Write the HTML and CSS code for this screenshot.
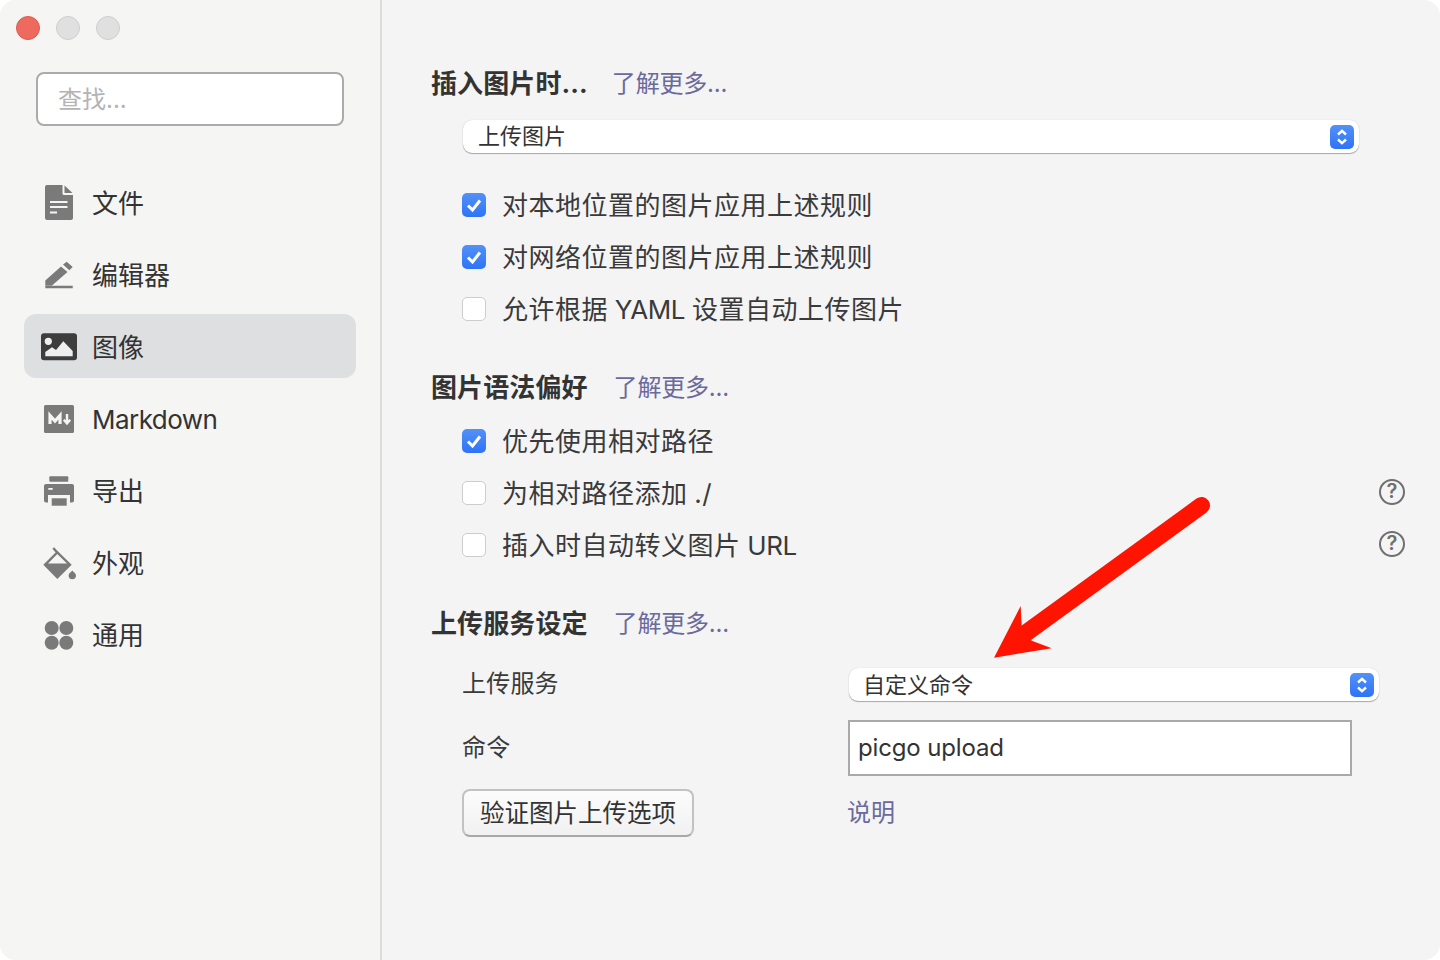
FILE: index.html
```html
<!DOCTYPE html>
<html lang="zh-CN">
<head>
<meta charset="utf-8">
<title>偏好设置</title>
<link rel="stylesheet" href="styles.css">
</head>
<body>
<div class="window">
  <aside class="sidebar">
    <div class="lights"><span class="light red"></span><span class="light"></span><span class="light"></span></div>
    <div class="search">查找...</div>
    <nav class="nav">
      <div class="nav-item">
        <svg class="icon" viewBox="0 0 36 36"><path class="g" d="M6 1H21.5V9.5a1.5 1.5 0 0 0 1.5 1.5H32V34a2 2 0 0 1-2 2H6a2 2 0 0 1-2-2V3a2 2 0 0 1 2-2z"/><path class="g" d="M23.5 1.5 31.5 9H23.500z"/><path class="wl" d="M9 18H26.500M9 23H26.500M9 28.500H16"/></svg>
        <span>文件</span>
      </div>
      <div class="nav-item">
        <svg class="icon" viewBox="0 0 36 36"><path class="g" d="M4.300 29.500V24.500L20 10.500 26.500 16 11 29.500zM4.300 29.700H31.700V32.300H4.300zM22 8.500 25.700 5.700 31.700 11 28.300 14.300z"/></svg>
        <span>编辑器</span>
      </div>
      <div class="nav-item active">
        <svg class="icon" viewBox="0 0 36 36"><rect class="d" x="0" y="5.300" width="36" height="27" rx="3"/><circle cx="7.300" cy="13.300" r="3.600" fill="#eee"/><path fill="#eee" d="M4.300 28.300V24L11 19.300 15 22 22.300 13.300 31.700 23V28.300z"/></svg>
        <span>图像</span>
      </div>
      <div class="nav-item">
        <svg class="icon" viewBox="0 0 36 36"><rect class="g" x="3" y="5" width="30" height="28" rx="1.500"/><path class="ws" d="M9 24V15.500L14 21 19 15.500V24"/><path class="ws thin" d="M26 14V22.500M22.800 19.800 26 23.500 29.200 19.800"/></svg>
        <span class="en">Markdown</span>
      </div>
      <div class="nav-item">
        <svg class="icon" viewBox="0 0 36 36"><rect class="g" x="8.300" y="4.300" width="19" height="5.400" rx="1"/><path class="g" d="M5 12H31a2 2 0 0 1 2 2V28.500a2 2 0 0 1-2 2H29V23H7V30.500H5a2 2 0 0 1-2-2V14a2 2 0 0 1 2-2z"/><rect class="g" x="10.700" y="26.300" width="15" height="7.400"/><rect x="7.300" y="16" width="4.400" height="1.800" fill="#f5f5f4"/></svg>
        <span>导出</span>
      </div>
      <div class="nav-item">
        <svg class="icon" viewBox="0 0 36 36"><path class="g" d="M2.300 20.700 16.300 6.700 30.700 20.700 16.300 35zM7 19.600H26L16.300 10z"/><path class="handle" d="M12.300 4 17 9.500"/><path class="g" d="M31.300 26.500C32.500 28 35 29.500 35 31.500A3.700 3.700 0 0 1 27.600 31.500C27.600 29.500 30 28 31.300 26.500z"/></svg>
        <span>外观</span>
      </div>
      <div class="nav-item">
        <svg class="icon" viewBox="0 0 36 36"><circle class="g" cx="10.700" cy="12" r="7"/><circle class="g" cx="25.300" cy="12" r="7"/><circle class="g" cx="10.700" cy="26.700" r="7"/><circle class="g" cx="25.300" cy="26.700" r="7"/></svg>
        <span>通用</span>
      </div>
    </nav>
  </aside>

  <main class="main">
    <div class="heading first"><h2>插入图片时...</h2><a class="link">了解更多...</a></div>
    <div class="select wide"><span>上传图片</span>
      <svg class="stepper" viewBox="0 0 24 24"><rect width="24" height="24" rx="5" fill="url(#blue)"/><path class="chev" d="M8 9.500 12 5.800 16 9.500M8 14.500 12 18.200 16 14.500"/></svg>
    </div>
    <div class="rows top">
      <div class="row"><span class="box on"><svg viewBox="0 0 24 24"><path d="M6 12.500 10.500 17 18 7.500"/></svg></span><span class="text">对本地位置的图片应用上述规则</span></div>
      <div class="row"><span class="box on"><svg viewBox="0 0 24 24"><path d="M6 12.500 10.500 17 18 7.500"/></svg></span><span class="text">对网络位置的图片应用上述规则</span></div>
      <div class="row"><span class="box"></span><span class="text">允许根据 <span class="tight">YAML</span> 设置自动上传图片</span></div>
    </div>
    <div class="heading"><h2>图片语法偏好</h2><a class="link">了解更多...</a></div>
    <div class="rows">
      <div class="row"><span class="box on"><svg viewBox="0 0 24 24"><path d="M6 12.500 10.500 17 18 7.500"/></svg></span><span class="text">优先使用相对路径</span></div>
      <div class="row"><span class="box"></span><span class="text">为相对路径添加 ./</span><span class="help">?</span></div>
      <div class="row"><span class="box"></span><span class="text">插入时自动转义图片 <span class="tight">URL</span></span><span class="help">?</span></div>
    </div>
    <div class="heading"><h2>上传服务设定</h2><a class="link">了解更多...</a></div>
    <div class="form">
      <div class="label up">上传服务</div>
      <div class="select narrow"><span>自定义命令</span>
        <svg class="stepper" viewBox="0 0 24 24"><rect width="24" height="24" rx="5" fill="url(#blue)"/><path class="chev" d="M8 9.500 12 5.800 16 9.500M8 14.500 12 18.200 16 14.500"/></svg>
      </div>
      <div class="label mid">命令</div>
      <div class="field">picgo upload</div>
      <div class="button">验证图片上传选项</div>
      <a class="link doc">说明</a>
    </div>
  </main>

  <svg class="arrow" viewBox="0 0 1440 960">
    <defs><linearGradient id="blue" x1="0" y1="0" x2="0" y2="1"><stop offset="0" stop-color="#5291f8"/><stop offset="1" stop-color="#2f73f6"/></linearGradient></defs>
    <path class="shaft" d="M1201.500 505.500 1026 633"/>
    <path class="head" d="M994 657.700 1020.700 606 1021.700 626.700 1031.700 640.700 1051.700 648.300z"/>
  </svg>
</div>
</body>
</html>
```
FILE: styles.css
```css
* { box-sizing: border-box; }
html, body { margin: 0; padding: 0; background: #fff; }
body {
  width: 1440px;
  height: 960px;
  overflow: hidden;
  font-family: Inter, "Noto Sans CJK SC", sans-serif;
  line-height: 1;
  color: #3a3a3a;
}
.window {
  position: relative;
  display: flex;
  width: 1440px;
  height: 960px;
  border-radius: 16px;
  overflow: hidden;
  background: #f4f4f4;
}
.sidebar {
  width: 382px;
  flex: none;
  background: #f5f5f4;
  border-right: 2px solid #dcdcdc;
  padding: 16px 24px 0 16px;
}
.lights { display: flex; gap: 16px; }
.light {
  width: 24px;
  height: 24px;
  border-radius: 50%;
  background: #e0e0e0;
  border: 1px solid #cfcfcf;
}
.light.red { background: #ee6a5f; border-color: #dd5a50; }
.search {
  margin: 32px 0 0 20px;
  width: 308px;
  height: 54px;
  border: 2px solid #ababab;
  border-radius: 8px;
  background: #fff;
  padding-left: 20px;
  font-size: 24px;
  line-height: 52px;
  color: #b4b4b4;
}
.nav { margin: 44px 0 0 8px; display: flex; flex-direction: column; gap: 8px; }
.nav-item {
  display: flex;
  align-items: center;
  gap: 15px;
  width: 332px;
  height: 64px;
  padding-left: 17px;
  border-radius: 12px;
  font-size: 26px;
  color: #333;
}
.nav-item span { padding-top: 4px; }
.nav-item.active { background: #dedfe1; }
.en { letter-spacing: -.55px; }
.icon { width: 36px; height: 36px; flex: none; overflow: visible; }
.icon .g { fill: #7a7a7a; fill-rule: evenodd; }
.icon .d { fill: #3d3d3d; }
.icon .wl { fill: none; stroke: #f5f5f4; stroke-width: 2; }
.icon .ws { fill: none; stroke: #f5f5f4; stroke-width: 3.200; }
.icon .ws.thin { stroke-width: 2.400; }
.icon .handle { fill: none; stroke: #7a7a7a; stroke-width: 2.400; }

.main { flex: 1; padding: 60px 35px 0 49px; min-width: 0; }
.heading { display: flex; align-items: center; height: 46px; margin-top: 29px; gap: 26px; }
.heading.first { margin-top: 0; gap: 24px; }
.heading h2 { margin: 2px 0 0; font-size: 26px; font-weight: 700; color: #333; letter-spacing: .1px; }
.link { font-size: 24px; color: #6a6a9c; letter-spacing: -.2px; }
.heading .link { margin-top: 2px; }
.select {
  display: flex;
  align-items: center;
  justify-content: space-between;
  height: 33px;
  background: #fff;
  border-radius: 9px;
  box-shadow: 0 0 1px rgba(0,0,0,.2), 0 1px 1px rgba(0,0,0,.3);
  padding: 0 5px 0 15px;
  font-size: 22px;
  color: #333;
}
.select.wide { margin: 14px 46px 0 32px; }
.select.wide > span { margin-bottom: 2px; }
.stepper { width: 24px; height: 24px; flex: none; }
.chev { fill: none; stroke: #fff; stroke-width: 2.400; }
.rows { margin-top: 5px; }
.rows.top { margin-top: 26px; }
.row {
  display: flex;
  align-items: center;
  height: 52px;
  padding-left: 31px;
  gap: 16px;
  font-size: 26px;
  letter-spacing: .5px;
  word-spacing: -1px;
}
.text { padding-top: 2px; }
.tight { letter-spacing: -.4px; }
.box {
  width: 24px;
  height: 24px;
  flex: none;
  border-radius: 5px;
  background: #fff;
  border: 1px solid #cdcdcd;
}
.box.on {
  border: 0;
  background: linear-gradient(#5291f8, #2f73f6);
}
.box svg { display: block; width: 24px; height: 24px; fill: none; stroke: #fff; stroke-width: 3; }
.help {
  margin: 0 0 2px auto;
  width: 26px;
  height: 26px;
  border: 2.500px solid #6f6f6f;
  border-radius: 50%;
  font-size: 20px;
  font-weight: 600;
  line-height: 21px;
  text-align: center;
  letter-spacing: 0;
  color: #6f6f6f;
}
.form {
  display: grid;
  grid-template-columns: 386px 1fr;
  grid-template-rows: 34px 74px 61px;
  padding-left: 31px;
  margin-top: 22px;
}
.label { font-size: 24px; letter-spacing: .2px; align-self: center; }
.label.up { margin-bottom: 2px; }
.label.mid { margin-top: 18px; }
.select.narrow { margin: 0 26px 0 1px; padding-left: 14px; }
.field {
  align-self: end;
  width: 504px;
  height: 56px;
  border: 2px solid #a9a9a9;
  background: #fff;
  padding-left: 8px;
  font-size: 24px;
  letter-spacing: -.15px;
  line-height: 52px;
  color: #333;
}
.button {
  align-self: end;
  width: 232px;
  height: 48px;
  border: 2px solid #c2c2c2;
  border-bottom-color: #a8a8a8;
  border-radius: 8px;
  background: linear-gradient(#fcfcfc, #f1f1f1);
  text-align: center;
  font-size: 24.500px;
  line-height: 44px;
  color: #333;
}
.doc { align-self: end; padding-bottom: 12px; letter-spacing: 0; margin-left: -1px; }
.arrow { position: absolute; left: 0; top: 0; width: 1440px; height: 960px; pointer-events: none; }
.shaft { fill: none; stroke: #fe1400; stroke-width: 17; stroke-linecap: round; }
.head { fill: #fe1400; }
```
